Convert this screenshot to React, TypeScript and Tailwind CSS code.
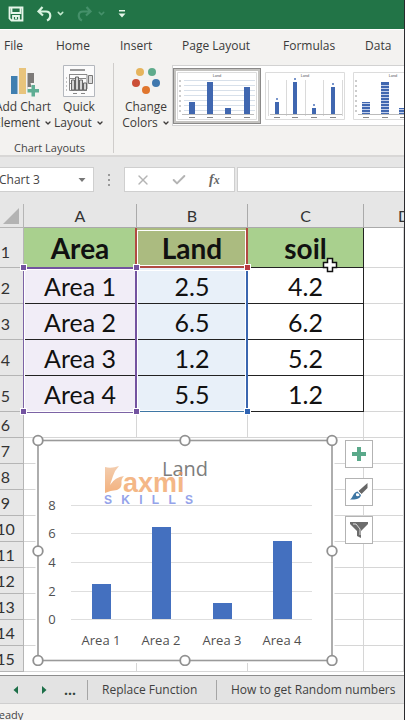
import React from "react";
import { Check, ChevronDown, X } from "lucide-react";

const UI = "font-['Open_Sans','Noto_Sans',sans-serif]";
const CELL = "font-[Lato,'Open_Sans',sans-serif]";

const tabs = [
  { name: "File", width: "w-13" },
  { name: "Home", width: "w-16" },
  { name: "Insert", width: "w-[62px]" },
  { name: "Page Layout", width: "w-[101px]" },
  { name: "Formulas", width: "w-[82px]" },
  { name: "Data", width: "w-10" },
];

const rows = [
  ["Area 1", "2.5", "4.2"],
  ["Area 2", "6.5", "6.2"],
  ["Area 3", "1.2", "5.2"],
  ["Area 4", "5.5", "1.2"],
];

const emptyRows = [6, 7, 8, 9, 10, 11, 12, 13, 14, 15];

function SaveIcon() {
  return (
    <svg className="h-4 w-4" viewBox="0 0 16 16" fill="none" stroke="#e6f6ea" strokeWidth="1.8">
      <path d="M1.5 1.5h13v13H3.5l-2-2z" />
      <path d="M3.5 2v5h9V2M5 14v-4h6v4M8 11v2" />
    </svg>
  );
}

function UndoIcon({ color }: { color: string }) {
  return (
    <svg className="h-4 w-4" viewBox="0 0 16 16" fill="none" stroke={color} strokeWidth="2.2">
      <path d="M6.5 1L2.5 5.500l4.500 4M3 5.500h7c5.500 0 5.500 7 1 9" />
    </svg>
  );
}

function TitleBar() {
  return (
    <header className="flex h-[29px] items-center bg-[#227447] pb-0.5 pl-2">
      <button aria-label="Save"><SaveIcon /></button>
      <button aria-label="Undo" className="ml-3"><UndoIcon color="#d8f3df" /></button>
      <button aria-label="Undo history" className="ml-1"><ChevronDown size={9} strokeWidth={4} color="#c2e8cd" /></button>
      <button aria-label="Redo" className="ml-3 -scale-x-100"><UndoIcon color="#45906a" /></button>
      <button aria-label="Redo history" className="ml-1"><ChevronDown size={9} strokeWidth={4} color="#45906a" /></button>
      <button aria-label="Customize toolbar" className="ml-3">
        <svg className="h-2 w-2" viewBox="0 0 8 8" fill="#e6f6ea">
          <path d="M1 0h6v1.4H1zM0.5 3.4h7L4 7.4z" />
        </svg>
      </button>
    </header>
  );
}

function AddChartIcon() {
  return (
    <svg className="h-8 w-8" viewBox="0 0 32 32">
      <path d="M4 11h6.500v18H4z" fill="#3f7fb0" />
      <path d="M12 3h7v26h-7z" fill="#e8c47c" />
      <path d="M20.500 8h6.500v16h-6.500z" fill="#7c7a78" />
      <path d="M23.500 18h6v4h4v5h-4v5h-5v-5h-4v-5h4z" fill="#f3f2f0" />
      <path d="M24.500 20h3.500v4h4v3.500h-4v4h-3.500v-4h-4V24h4z" fill="#5fae94" />
    </svg>
  );
}

function QuickLayoutIcon() {
  return (
    <svg className="h-8 w-8" viewBox="0 0 32 32" fill="none" stroke="#777">
      <path d="M0.500 0.500h31v31H0.500z" fill="#fbfbfb" stroke="#b4b8be" />
      <path d="M7 5h15" strokeWidth="2" stroke="#999" />
      <path d="M6.500 9v16.500H24M6.500 9.500H24V24M7 13.500h16M7 18.500h16" stroke="#888" />
      <path d="M8.500 15h3v10h-3zM12.500 12h3v13h-3zM16.500 15h3v10h-3zM20.500 18h3v7h-3z" fill="#d5d5d5" stroke="#666" />
      <path d="M25.500 10.500h4v8h-4z" fill="#ddd" stroke="#777" />
      <path d="M3 13h1M3 17h1M3 21h1M3 25h1M10 28.500h4M18 28.500h4" stroke="#888" />
    </svg>
  );
}

function ColorsIcon() {
  return (
    <svg className="h-8 w-8" viewBox="0 0 32 32">
      <circle cx="10" cy="7" r="4" fill="#e6b45c" />
      <circle cx="22" cy="7" r="4" fill="#5fab8c" />
      <circle cx="6" cy="18" r="4" fill="#cb4f37" />
      <circle cx="26" cy="18" r="4" fill="#3f78ae" />
      <circle cx="16" cy="25" r="4" fill="#e0762e" />
    </svg>
  );
}

type RibbonButtonProps = { icon: React.ReactNode; top: string; bottom: string; className: string };

function RibbonButton({ icon, top, bottom, className }: RibbonButtonProps) {
  return (
    <button className={`flex flex-none flex-col items-center text-xs leading-4 whitespace-nowrap text-[#3d3b39] ${className}`}>
      {icon}
      <span className="mt-0.5">{top}</span>
      <span className="flex items-center gap-1">
        {bottom}
        <ChevronDown size={8} strokeWidth={4} />
      </span>
    </button>
  );
}

type ThumbKind = "lines" | "columns" | "striped";

const thumbs = {
  lines: { wide: 6, centers: [15, 33, 51, 70] },
  columns: { wide: 4, centers: [12, 30, 49, 68] },
  striped: { wide: 8, centers: [13, 32, 50, 68] },
};

const heights = [12, 32, 6, 27];

function StyleThumb({ kind }: { kind: ThumbKind }) {
  const { wide, centers } = thumbs[kind];
  return (
    <svg className="h-12 w-20" viewBox="0 0 80 48">
      <path d="M0.500 0.500h79v47H0.500z" fill="#fff" stroke="#dcdcdc" />
      <text x="40" y="5" fontSize="4" textAnchor="middle" fill="#555" className="font-[Lato,sans-serif]">Land</text>
      {kind === "lines" && <path d="M7 8.500h71M7 13.500h71M7 18.500h71M7 23.500h71M7 28.500h71M7 33.500h71M7 38.500h71" stroke="#d7e0ea" />}
      {kind === "columns" && <path d="M3.500 8v36M21.500 8v36M40.500 8v36M58.500 8v36M77.500 8v36" stroke="#dadada" />}
      {centers.map((c, i) => (
        <g key={c}>
          <rect x={c - wide / 2} y={42 - heights[i]} width={wide} height={heights[i]} fill="#4067b0" />
          <path d={`M${c - 3} 45.500h6`} stroke="#888" />
          {kind === "columns" && <path d={`M${c - 1} ${39 - heights[i]}h2`} stroke="#7a96cc" strokeWidth="2" />}
          {kind === "striped" &&
            [2, 5, 8, 11, 14, 17, 20, 23, 26, 29].filter((s) => s < heights[i]).map((s) => (
              <path key={s} d={`M${c - 4} ${42.5 - s}h8`} stroke="#c3d0ea" />
            ))}
        </g>
      ))}
      <path d="M5 42.500h72" stroke="#bbb" />
      {kind !== "columns" && <path d="M3 8.500v34" stroke="#999" strokeDasharray="1 4" strokeWidth="2" />}
    </svg>
  );
}

function Ribbon() {
  return (
    <>
      <nav className="flex h-8 items-center overflow-hidden border-t border-white bg-[#f3f2f0] pl-1 text-xs text-[#3a3a3a]">
        {tabs.map((t) => (
          <button key={t.name} className={`flex-none text-left whitespace-nowrap ${t.width}`}>{t.name}</button>
        ))}
      </nav>
      <section className="flex h-24 overflow-hidden border-b-2 border-[#d8d7d6] bg-[#f3f2f0]">
        <div className="flex w-[113px] flex-none flex-col pt-1">
          <div className="flex">
            <RibbonButton className="-ml-2 w-[62px]" icon={<AddChartIcon />} top="Add Chart" bottom="Element" />
            <RibbonButton className="w-[50px]" icon={<QuickLayoutIcon />} top="Quick" bottom="Layout" />
          </div>
          <p className="mt-2 pl-3.5 text-[11px] leading-[18px] text-[#444]">Chart Layouts</p>
        </div>
        <div className="my-0.5 w-px flex-none bg-[#cfcdcb]" />
        <RibbonButton className="w-16 pt-1" icon={<ColorsIcon />} top="Change" bottom="Colors" />
        <div className="mt-1 -ml-1.5 flex h-[61px] flex-none items-center border border-[#d2d2d2] bg-white">
          <button aria-label="Style 1" className="border-3 border-[#c4c3c0] bg-white p-px outline outline-[#8a8988] -outline-offset-1"><StyleThumb kind="lines" /></button>
          <button aria-label="Style 2" className="p-1"><StyleThumb kind="columns" /></button>
          <button aria-label="Style 3" className="p-1"><StyleThumb kind="striped" /></button>
        </div>
      </section>
    </>
  );
}

function FormulaBar() {
  return (
    <section className="flex h-[47px] items-center bg-[#e6e6e6] pb-0.5 text-[#444]">
      <div className="flex h-[25px] w-[94px] flex-none items-center border border-l-0 border-[#cfcfcf] bg-white">
        <input aria-label="Name box" defaultValue="Chart 3" className="-ml-px w-[79px] bg-transparent text-xs outline-none" />
        <button aria-label="Open name list">
          <svg className="h-1.5 w-2" viewBox="0 0 8 6" fill="#777"><path d="M0.500 1h7L4 5z" /></svg>
        </button>
      </div>
      <svg className="mx-[13px] h-3 w-1 flex-none" viewBox="0 0 4 12" fill="#999">
        <path d="M1 0h2v2H1zM1 5h2v2H1zM1 10h2v2H1z" />
      </svg>
      <div className="flex h-[25px] w-[111px] flex-none items-center border border-[#cfcfcf] bg-white">
        <button aria-label="Cancel" className="ml-2.5"><X size={16} color="#b4b4b4" /></button>
        <button aria-label="Enter" className="ml-5"><Check size={16} strokeWidth={3} color="#b4b4b4" /></button>
        <button aria-label="Insert function" className="ml-[22px] font-['Liberation_Serif',serif] text-sm leading-5 font-bold text-[#666] italic">
          f<span className="text-xs">x</span>
        </button>
      </div>
      <input aria-label="Formula" className="ml-0.5 h-[25px] min-w-0 flex-1 border border-r-0 border-[#cfcfcf] bg-white outline-none" />
    </section>
  );
}

function Sheet() {
  const rowHead = "border-r border-b border-[#b5b5b5] bg-[#e7e7e7] p-0 text-center text-[16px] leading-5 font-normal text-[#333]";
  const dark = "border-r border-b border-[#222] p-0 text-center";
  const light = "border-r border-b border-[#d6d6d6] bg-white p-0";
  return (
    <table className={`-ml-3 w-[calc(100%+12px)] table-fixed border-separate border-spacing-0 text-[#111] ${CELL}`}>
      <colgroup>
        <col className="w-9" />
        <col className="w-[113px]" />
        <col className="w-[111px]" />
        <col className="w-[116px]" />
        <col />
      </colgroup>
      <thead>
        <tr className="h-6 bg-[#e6e6e6] text-base leading-5 text-[#333]">
          <th aria-label="Select all" className="border-r border-b border-[#b5b5b5] p-0">
            <svg className="mr-1 ml-auto h-4 w-4" viewBox="0 0 16 16" fill="#b3b3b3"><path d="M16 0v16H0z" /></svg>
          </th>
          {["A", "B", "C"].map((c) => (
            <th key={c} className="border-r border-b border-[#aaa] p-0 font-normal">{c}</th>
          ))}
          <th className="overflow-hidden border-b border-[#aaa] p-0 text-left font-normal"><span className="ml-[34px]">D</span></th>
        </tr>
      </thead>
      <tbody>
        <tr className="h-10 text-[28px] leading-8 font-bold">
          <th className={`${rowHead} pt-2`}>1</th>
          <td className={`${dark} bg-[#a9d08e]`}>Area</td>
          <td className={`${dark} bg-[#abbb80]`}>Land</td>
          <td className={`${dark} bg-[#a9d08e]`}>soil</td>
          <td className={light} />
        </tr>
        {rows.map((r, i) => (
          <tr key={r[0]} className="h-9 text-[25px] leading-8">
            <th className={`${rowHead} pt-1`}>{i + 2}</th>
            <td className={`${dark} bg-[#f1edf7]`}>{r[0]}</td>
            <td className={`${dark} bg-[#e8f0f9]`}>{r[1]}</td>
            <td className={`${dark} bg-white`}>{r[2]}</td>
            <td className={light} />
          </tr>
        ))}
        {emptyRows.map((n) => (
          <tr key={n} className="h-[26px]">
            <th className={rowHead}>{n}</th>
            <td className={light} />
            <td className={light} />
            <td className={light} />
            <td className={light} />
          </tr>
        ))}
      </tbody>
    </table>
  );
}

function RangeMarks() {
  const handle = "absolute h-[5px] w-[5px] outline outline-white";
  return (
    <div className="pointer-events-none">
      <div className="absolute top-6 left-[135px] h-10 w-[113px] border-2 border-t-0 border-[#b14a42] outline outline-white -outline-offset-3" />
      <div className="absolute top-16 left-[23px] h-[145px] w-[114px] border border-r-0 border-[#7c63a5] outline outline-white -outline-offset-2" />
      <div className="absolute top-16 left-[135px] h-[145px] w-[113px] border-r-2 border-l-2 border-r-[#3a66b0] border-l-[#7353a0] outline outline-white -outline-offset-3" />
      <div className="absolute top-[207px] left-[137px] h-px w-[110px] bg-[#3f77a5]" />
      <div className="absolute top-[63px] left-6 h-0.5 w-28 bg-[#7353a0]" />
      <div className={`${handle} top-[61px] left-[134px] bg-[#7353a0]`} />
      <div className={`${handle} top-[205px] left-[134px] bg-[#7353a0]`} />
      <div className={`${handle} top-[61px] left-[21px] bg-[#7353a0]`} />
      <div className={`${handle} top-[205px] left-[21px] bg-[#7353a0]`} />
      <div className={`${handle} top-[61px] left-[245px] bg-[#b83a40]`} />
      <div className={`${handle} top-[205px] left-[245px] bg-[#3064b4]`} />
    </div>
  );
}

const bars = [
  { label: "Area 1", x: 92, y: 584 },
  { label: "Area 2", x: 152, y: 527 },
  { label: "Area 3", x: 213, y: 603 },
  { label: "Area 4", x: 273, y: 541 },
];

const axis = [
  { value: 8, y: 505 },
  { value: 6, y: 533 },
  { value: 4, y: 562 },
  { value: 2, y: 591 },
  { value: 0, y: 619 },
];

function Chart() {
  return (
    <figure aria-label="Land chart" className="absolute top-[230px] left-8 h-[232px] w-[306px]">
      <svg className="h-full w-full" viewBox="32 434 306 232">
        <rect x="38" y="440.500" width="294" height="220" fill="#fff" stroke="#fff" strokeWidth="5" />
        <rect x="38" y="440.500" width="294" height="220" fill="#fff" stroke="#9a9a9a" strokeWidth="1.600" />
        <g fill="#505050" className={UI}>
          <text x="185" y="476" fontSize="20" textAnchor="middle" fill="#7d7d7d">Land</text>
          {axis.map((a) => (
            <g key={a.value}>
              <path d={`M71 ${a.y + 0.5}H312`} stroke="#dedede" />
              <text x="52" y={a.y + 5} fontSize="13" textAnchor="middle">{a.value}</text>
            </g>
          ))}
          {bars.map((b) => (
            <g key={b.label}>
              <rect x={b.x} y={b.y} width="19" height={619 - b.y} fill="#4470bf" />
              <text x={b.x + 9} y="645" fontSize="13" textAnchor="middle">{b.label}</text>
            </g>
          ))}
        </g>
        <g fill="#fff" stroke="#919191" strokeWidth="1.800">
          {[38, 185, 332].map((x) => (
            <g key={x}>
              <circle cx={x} cy="440.500" r="4.800" />
              <circle cx={x} cy="660.500" r="4.800" />
              {x !== 185 && <circle cx={x} cy="551" r="4.800" />}
            </g>
          ))}
        </g>
      </svg>
    </figure>
  );
}

function Watermark() {
  return (
    <div className="pointer-events-none absolute top-[261px] left-[104px] w-[89px] font-['Liberation_Sans',sans-serif] font-bold">
      <div className="flex h-7 items-end opacity-70">
        <svg className="h-7 w-5 flex-none" viewBox="0 0 20 28">
          <defs>
            <linearGradient id="flame" x1="0" y1="0" x2="0" y2="1">
              <stop offset="0" stopColor="#efb98e" />
              <stop offset="1" stopColor="#ee9148" />
            </linearGradient>
          </defs>
          <path d="M1 2Q7 4 15 1Q11 5 9 11L6 20Q11 12 20 11Q17 14 17.500 18Q18 23 13 25Q6 25.500 1 28Z" fill="url(#flame)" />
        </svg>
        <span className="-ml-px text-[27px] leading-5 text-[#f09a55]">axmi</span>
      </div>
      <div className="mt-px flex justify-between text-xs leading-3 text-[#94a3ea]">
        {["S", "K", "I", "L", "L", "S"].map((c, i) => (
          <span key={i}>{c}</span>
        ))}
      </div>
    </div>
  );
}

function ChartTools() {
  const box = "flex h-7 w-7 items-center justify-center border border-[#b3b3b3] bg-white";
  return (
    <div className="absolute top-[236px] left-[345px] flex flex-col gap-2.5">
      <button aria-label="Chart elements" className={box}>
        <svg className="h-4 w-4" viewBox="0 0 16 16" fill="#5aa98a"><path d="M6 1h4v5h5v4h-5v5H6v-5H1V6h5z" /></svg>
      </button>
      <button aria-label="Chart styles" className={box}>
        <svg className="h-5 w-5" viewBox="0 0 20 20">
          <path d="M18.500 1v5l-6 6-3-3z" fill="#666" />
          <path d="M9 9l3.500 3.500" stroke="#fff" />
          <path d="M8.500 9.500l3.500 3.500c-1 4-5 5-11 4.500 3-1.500 3-7 7.500-8z" fill="#3d76a3" />
          <path d="M7 11.500q3-1 3.500 2-2 1.500-3.500 0z" fill="#fff" />
        </svg>
      </button>
      <button aria-label="Chart filters" className={box}>
        <svg className="h-5 w-5" viewBox="0 0 20 20">
          <path d="M1 2h18v2l-7 7v7l-4-2v-5L1 4z" fill="#6c6c6c" />
          <path d="M4 4h3l4 5v6" fill="none" stroke="#ddd" />
        </svg>
      </button>
    </div>
  );
}

function Cursor() {
  return (
    <svg className="pointer-events-none absolute top-[53px] left-[322px] h-4 w-4" viewBox="0 0 16 16">
      <path d="M5.500 1.500h5v4h4v5h-4v4h-5v-4h-4v-5h4z" fill="#fff" stroke="#111" strokeWidth="1.500" />
    </svg>
  );
}

function SheetTabs() {
  return (
    <nav className="flex h-[29px] items-center overflow-hidden border-t border-b border-t-[#8d8d8d] border-b-[#cfcfcf] bg-[#e3e3e3] text-xs whitespace-nowrap text-[#3f3f3f]">
      <button aria-label="Previous sheet" className="ml-3 flex-none">
        <svg className="h-2 w-2" viewBox="0 0 8 8" fill="#1d6f48"><path d="M6 0v8L1.500 4z" /></svg>
      </button>
      <button aria-label="Next sheet" className="ml-5 flex-none">
        <svg className="h-2 w-2" viewBox="0 0 8 8" fill="#1d6f48"><path d="M2 0v8l4.500-4z" /></svg>
      </button>
      <button className="ml-4 w-[23px] flex-none text-left text-sm leading-5 font-bold text-[#33443a]">...</button>
      <button className="h-5 w-[129px] flex-none border-l border-[#a5a5a5] pl-3.5 text-left leading-4">Replace Function</button>
      <button className="h-5 flex-none border-l border-[#a5a5a5] pl-3.5 leading-4">How to get Random numbers</button>
    </nav>
  );
}

export default function App() {
  return (
    <main className={`overflow-hidden border-r border-[#2a2a2e] bg-[#f3f2f0] ${UI}`}>
      <TitleBar />
      <Ribbon />
      <FormulaBar />
      <section className="relative overflow-hidden bg-white pb-[3px]">
        <Sheet />
        <RangeMarks />
        <Chart />
        <Watermark />
        <ChartTools />
        <Cursor />
      </section>
      <SheetTabs />
      <footer className="h-4 overflow-hidden text-[11px] leading-[22px] text-[#444]">
        <span className="-ml-2">Ready</span>
      </footer>
    </main>
  );
}
